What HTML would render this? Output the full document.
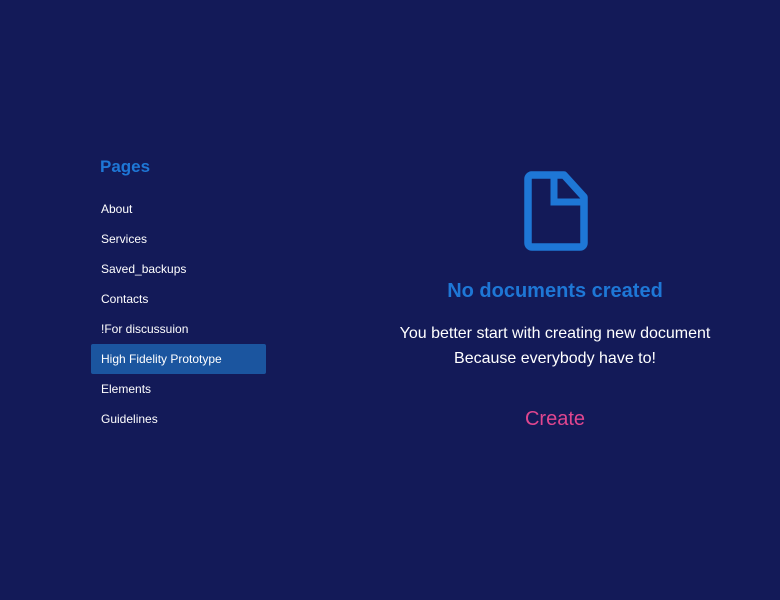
<!DOCTYPE html>
<html><head><style>
html,body{margin:0;padding:0;}
body{width:780px;height:600px;background:#131a58;position:relative;overflow:hidden;font-family:"Liberation Sans",sans-serif;}
.h{position:absolute;left:100px;top:157px;color:#1e77d6;font-size:17px;font-weight:bold;}
.it{position:absolute;left:91px;width:175px;height:30px;line-height:30px;padding-left:10px;box-sizing:border-box;color:#fff;font-size:12px;}
.sel{background:#1b559f;border-radius:2px;}
.t{position:absolute;left:340px;width:430px;text-align:center;}
</style></head><body>
<div class="h">Pages</div>
<div class="it" style="top:194px">About</div>
<div class="it" style="top:224px">Services</div>
<div class="it" style="top:254px">Saved_backups</div>
<div class="it" style="top:284px">Contacts</div>
<div class="it" style="top:314px">!For discussuion</div>
<div class="it sel" style="top:344px">High Fidelity Prototype</div>
<div class="it" style="top:374px">Elements</div>
<div class="it" style="top:404px">Guidelines</div>
<svg style="position:absolute;left:520px;top:167px" width="72" height="88" viewBox="0 0 72 88">
<path d="M11 8 H44 L64 30 V76 A4 4 0 0 1 60 80 H12 A4 4 0 0 1 8 76 V12 A4 4 0 0 1 12 8 Z" fill="none" stroke="#1e77d6" stroke-width="7.5" stroke-linejoin="round"/>
<path d="M34 8 V35 H64" fill="none" stroke="#1e77d6" stroke-width="7"/>
</svg>
<div class="t" style="top:280px;color:#1e77d6;font-size:20px;font-weight:bold;">No documents created</div>
<div class="t" style="top:321px;color:#fff;font-size:16px;line-height:25px;">You better start with creating new document<br>Because everybody have to!</div>
<div class="t" style="top:408px;color:#e0468f;font-size:20px;">Create</div>
</body></html>
